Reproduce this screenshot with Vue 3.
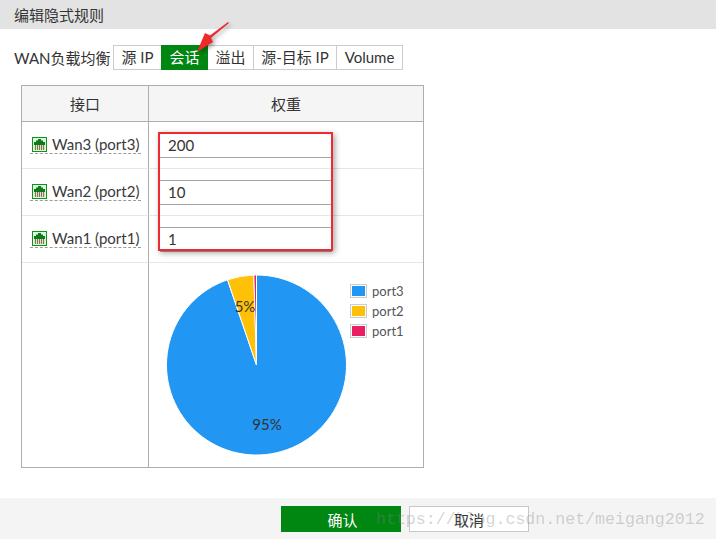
<script setup>
const tabs = [
  { label: '源 IP', width: 49 },
  { label: '会话', width: 47, active: true },
  { label: '溢出', width: 47 },
  { label: '源-目标 IP', width: 84 },
  { label: 'Volume', width: 67 }
]
const rows = [
  { name: 'Wan3 (port3)', value: '200' },
  { name: 'Wan2 (port2)', value: '10' },
  { name: 'Wan1 (port1)', value: '1' }
]
const legend = [
  { name: 'port3', color: '#2196f3' },
  { name: 'port2', color: '#ffc107' },
  { name: 'port1', color: '#e91e63' }
]
const cx = 107.5
const cy = 102
const r = 90
function pt(deg) {
  const a = (deg * Math.PI) / 180
  return `${(cx + r * Math.sin(a)).toFixed(2)} ${(cy - r * Math.cos(a)).toFixed(2)}`
}
function slice(from, to) {
  const large = to - from > 180 ? 1 : 0
  return `M${cx} ${cy} L${pt(from)} A${r} ${r} 0 ${large} 1 ${pt(to)} Z`
}
const slices = [
  { d: slice(0, 341.2), color: '#2196f3' },
  { d: slice(341.2, 358.3), color: '#ffc107' },
  { d: slice(358.3, 360), color: '#e91e63' }
]
</script>

<template>
  <div class="page">
    <header class="title">编辑隐式规则</header>

    <div class="balance">
      <span class="balance-label">WAN负载均衡</span>
      <div class="tabs">
        <button
          v-for="t in tabs"
          :key="t.label"
          class="tab"
          :class="{ active: t.active }"
          :style="{ width: t.width + 'px' }"
        >{{ t.label }}</button>
      </div>
    </div>

    <section class="grid">
      <div class="head head-left">接口</div>
      <div class="head">权重</div>

      <template v-for="row in rows" :key="row.name">
        <div class="cell cell-left">
          <span class="iface">
            <svg class="port" width="15" height="15" viewBox="0 0 15 15">
              <rect x="0.5" y="0.5" width="14" height="14" fill="#dff5e6" stroke="#0c9414" />
              <path d="M2 8V5h2V3.500h2V2h3v1.500h2V5h2v3z" fill="#0c7c16" />
              <rect x="2" y="8" width="11" height="5" fill="#eadfb4" />
              <path d="M3.500 8v5M5.500 8v5M7.500 8v5M9.500 8v5M11.500 8v5" stroke="#77776a" stroke-width="1" />
            </svg>
            <span>{{ row.name }}</span>
          </span>
        </div>
        <div class="cell cell-right">
          <div class="field">{{ row.value }}</div>
        </div>
      </template>

      <div class="chart-left"></div>
      <div class="chart">
        <svg class="pie" width="216" height="204" viewBox="0 0 216 204">
          <path v-for="s in slices" :key="s.color" :d="s.d" :fill="s.color" stroke="#fff" stroke-width="1" />
          <text x="118" y="167" text-anchor="middle" class="pie-label">95%</text>
          <text x="96" y="49" text-anchor="middle" class="pie-label">5%</text>
        </svg>
        <ul class="legend">
          <li v-for="l in legend" :key="l.name">
            <span class="swatch"><i :style="{ background: l.color }"></i></span>
            {{ l.name }}
          </li>
        </ul>
      </div>
    </section>

    <footer class="footer">
      <button class="btn primary">确认</button>
      <button class="btn">取消</button>
    </footer>

    <div class="redbox"></div>

    <svg class="arrow" width="50" height="50" viewBox="0 0 50 50">
      <path d="M38 3 L20 16.500 L15 14 L7 33 L23 23 L21 19 L39 4 Z" fill="#ee2a2a" />
    </svg>

    <div class="watermark">https://blog.csdn.net/meigang2012</div>
  </div>
</template>

<style>
html, body { margin: 0; background: #fff; }
</style>

<style scoped>
.page {
  position: relative;
  width: 716px;
  height: 539px;
  overflow: hidden;
  display: flex;
  flex-direction: column;
  background: #fff;
  color: #333;
  font-family: Lato, "Noto Sans CJK SC", sans-serif;
  font-size: 15px;
}
.title {
  height: 29px;
  line-height: 30px;
  padding-left: 14px;
  background: #e3e3e3;
  flex: none;
}
.balance {
  display: flex;
  align-items: center;
  height: 25px;
  margin-top: 16px;
  padding-left: 14px;
  flex: none;
}
.balance-label { width: 99px; white-space: nowrap; }
.tabs { display: flex; }
.tab {
  box-sizing: border-box;
  height: 25px;
  margin: 0 0 0 -1px;
  padding: 0 0 2px;
  border: 1px solid #ccc;
  background: #fff;
  color: #333;
  font: inherit;
  white-space: nowrap;
}
.tab:first-child { margin-left: 0; }
.tab.active {
  position: relative;
  background: #008712;
  border-color: #008712;
  color: #fff;
}
.grid {
  box-sizing: border-box;
  display: grid;
  grid-template-columns: 127px 274px;
  grid-template-rows: 36px 47px 47px 47px 204px;
  width: 403px;
  height: 383px;
  margin: 15px 0 0 21px;
  border: 1px solid #aeaeae;
  flex: none;
}
.head {
  display: flex;
  align-items: center;
  justify-content: center;
  background: #f5f5f5;
  border-bottom: 1px solid #aeaeae;
}
.head-left, .cell-left, .chart-left { border-right: 1px solid #aeaeae; }
.cell { box-sizing: border-box; border-bottom: 1px solid #e6e6e6; }
.cell-left {
  display: flex;
  justify-content: flex-end;
  padding: 14px 7px 0 0;
}
.iface {
  display: flex;
  align-items: flex-start;
  gap: 5px;
  width: 111px;
  height: 18px;
  padding-left: 2px;
  box-sizing: border-box;
  line-height: 17px;
  border-bottom: 1px dashed #9a9a9a;
  white-space: nowrap;
  color: #3a3a3a;
}
.port { flex: none; margin-top: 1px; }
.cell-right { padding: 11px 0 0 11px; }
.field {
  box-sizing: border-box;
  width: 172px;
  height: 25px;
  padding-left: 8px;
  line-height: 23px;
  border-top: 1px solid #a6a6a6;
  border-bottom: 1px solid #a6a6a6;
}
.chart {
  display: flex;
  align-items: flex-start;
}
.pie { flex: none; }
.pie-label { font-size: 15px; fill: #333; }
.legend {
  list-style: none;
  margin: 18px 0 0 -15px;
  padding: 0;
  font-size: 13px;
  color: #555;
}
.legend li {
  display: flex;
  align-items: center;
  gap: 5px;
  height: 20px;
}
.swatch {
  box-sizing: border-box;
  display: block;
  width: 17px;
  height: 14px;
  padding: 1px;
  border: 1px solid #ccc;
}
.swatch i { display: block; width: 100%; height: 100%; }
.footer {
  display: flex;
  gap: 8px;
  margin-top: auto;
  height: 41px;
  padding: 8px 0 0 281px;
  box-sizing: border-box;
  background: #f4f4f4;
  flex: none;
}
.btn {
  box-sizing: border-box;
  width: 120px;
  height: 26px;
  margin: 0;
  padding: 0;
  border: 1px solid #c8c8c8;
  background: #fff;
  color: #333;
  font: inherit;
}
.btn.primary {
  padding-left: 3px;
  background: #008712;
  border-color: #008712;
  color: #fff;
}
.redbox {
  position: absolute;
  left: 158px;
  top: 132px;
  width: 171px;
  height: 115px;
  border: 2px solid #ee2a30;
  box-shadow: 2px 2px 6px rgba(0, 0, 0, 0.35);
}
.arrow {
  position: absolute;
  left: 190px;
  top: 19px;
  filter: drop-shadow(2px 2px 2px rgba(0, 0, 0, 0.35));
}
.watermark {
  position: absolute;
  left: 376px;
  top: 510px;
  font-family: "Liberation Mono", monospace;
  font-size: 16.6px;
  line-height: 19px;
  color: rgba(130, 130, 130, 0.35);
  white-space: nowrap;
}
</style>
